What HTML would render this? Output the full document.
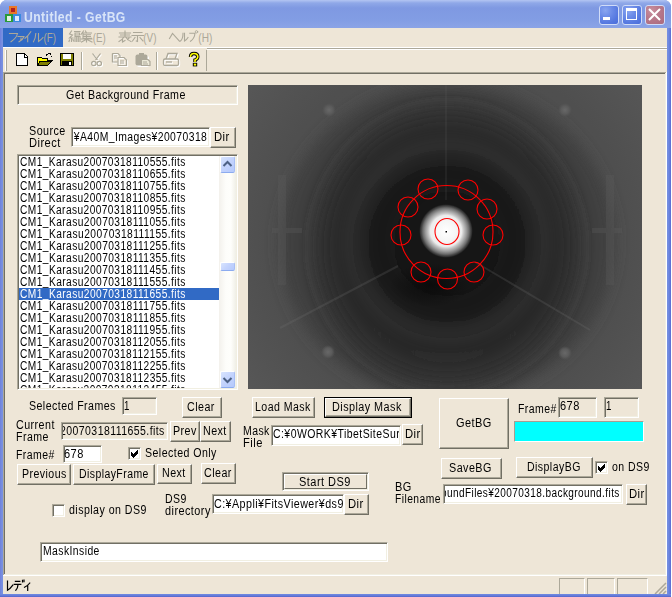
<!DOCTYPE html><html><head><meta charset="utf-8"><style>html,body{margin:0;padding:0;}
body{width:672px;height:597px;position:relative;overflow:hidden;background:#fff;font-family:"Liberation Sans",sans-serif;}
.t{position:absolute;white-space:pre;transform-origin:0 0;letter-spacing:0.5px;}
</style></head><body>
<div style="position:absolute;left:670px;top:0;width:2px;height:597px;background:#fff"></div>
<div style="position:absolute;left:0px;top:0px;width:671px;height:597px;background:linear-gradient(90deg,#6f80dc 0,#7890e0 2px,#7890e0 667px,#6a86e0 669px,#5a6ad0 671px);border-radius:7px 7px 0 0;"></div>
<div style="position:absolute;left:0px;top:594px;width:671px;height:3px;background:linear-gradient(180deg,#7088e0 0,#6a84de 1px,#5565cc 3px);"></div>
<div style="position:absolute;left:0px;top:0px;width:671px;height:28px;background:linear-gradient(180deg,#b3c5f2 0px,#8fa8e8 3px,#7f99e2 8px,#829de4 20px,#8aa3e6 27px);border-radius:7px 7px 0 0;"></div>
<span id="t0" class="t" style="transform:scaleX(0.8709);left:24.2px;top:9.65px;font-size:14px;line-height:14px;color:#d8e4f8;font-weight:bold;">Untitled - GetBG</span>
<svg style="position:absolute;left:4px;top:5px" width="18" height="18">
<rect x="5" y="1" width="8" height="8" fill="#e8782a"/><rect x="7" y="3" width="4" height="4" fill="#b02020"/>
<rect x="1" y="9" width="8" height="8" fill="#2a9a3a"/><rect x="3" y="11" width="4" height="5" fill="#e0f0e0"/>
<rect x="9" y="9" width="8" height="8" fill="#3a8ae0"/><rect x="11" y="11" width="4" height="5" fill="#dde8ff"/>
</svg>
<div style="position:absolute;left:599px;top:5px;width:20px;height:20px;background:radial-gradient(circle at 30% 25%,#8aa6f0 0,#6c8ce8 35%,#5578e0 70%,#4a6ddb 100%);border:1px solid #d0dcf8;border-radius:3px;box-sizing:border-box;"></div>
<div style="position:absolute;left:622px;top:5px;width:20px;height:20px;background:radial-gradient(circle at 30% 25%,#8aa6f0 0,#6c8ce8 35%,#5578e0 70%,#4a6ddb 100%);border:1px solid #d0dcf8;border-radius:3px;box-sizing:border-box;"></div>
<div style="position:absolute;left:645px;top:5px;width:20px;height:20px;background:radial-gradient(circle at 30% 25%,#c9909e 0,#b97a8c 40%,#aa6a7e 100%);border:1px solid #d0dcf8;border-radius:3px;box-sizing:border-box;"></div>
<div style="position:absolute;left:603px;top:17px;width:7px;height:3px;background:#fff;"></div>
<div style="position:absolute;left:626px;top:8px;width:11px;height:12px;box-sizing:border-box;border:1px solid #fff;border-top:3px solid #fff;"></div>
<svg style="position:absolute;left:645px;top:5px" width="20" height="20"><path d="M4 4 L15 15 M15 4 L4 15" stroke="#fff" stroke-width="2"/></svg>
<div style="position:absolute;left:3px;top:28px;width:664px;height:566px;background:#eee6d7;"></div>
<div style="position:absolute;left:3px;top:28px;width:60px;height:19px;background:#316ac5;"></div>
<div style="position:absolute;left:3px;top:47px;width:664px;height:1px;background:#fff;"></div>
<div style="position:absolute;left:207px;top:48px;width:460px;height:1px;background:#aca899;"></div>
<div style="position:absolute;left:207px;top:49px;width:460px;height:1px;background:#fff;"></div>
<svg style="position:absolute;left:0;top:28px" width="230" height="19" viewBox="0 28 230 19"><g fill="none" stroke="#aca899" stroke-width="1.1" stroke-linecap="square"><path d="M9.5 33.5 H17.5 Q16.5 38 11 41.8"/><path d="M18 36.5 H24 Q23 39.5 19 41.8 M21 38 V40.5"/><path d="M30.8 31.8 Q28.5 35.5 25 38.3 M27.7 36 V41.8"/><path d="M35.8 33.5 Q35.5 39 33.5 41.8 M38.5 33.5 V41.5 Q41 40 43 37.5"/><path d="M71.5 31 L69.5 34 L72.5 35 L69.5 38 H73 M71.5 38 V41.5 M69.5 40 L69 41.5 M73 39.5 L73.5 41"/><path d="M74.5 31.5 H80 M75 33 H79.5 V35 H75 V33 M75 33 V41.5 M75 36.5 H80 V41.5 M76.7 36.5 V41.5 M78.3 36.5 V41.5"/><path d="M83.5 31 L81 34.5 M83 33 V38 M83 33 H91.5 M85.5 31 L86.5 33 M83 34.8 H90.5 M83 36.5 H90.5 M83 38.3 H91.5 M81 39 H92 M86.5 35 V42 M86 39.5 L81.5 42 M87 39.5 L92 42"/><path d="M119.5 33 H130.5 M120.5 35 H129.5 M119 37 H131 M125 31 V37 M124 37 Q122 40 119 41.5 M122.5 39 V42 L125 40.5 M126 37.5 Q128 40.5 131 41.5 M129 38 L127.5 39.5"/><path d="M133.5 32.5 H142 M132 35.5 H143.5 M137.5 35.5 V41.5 L136.3 41 M135 37.5 L132.5 41 M140 37.5 L143 41"/><path d="M169.5 38.5 L172.5 33.5 L179.5 41.3"/><path d="M183 33.3 Q183 39 180.5 41 M184.5 33.3 V41 Q186.5 40 188 37.5"/><path d="M189.8 33.3 H195 Q194.5 38.5 190.5 41.3"/><circle cx="196.5" cy="31.8" r="1.2" stroke-width="0.9"/></g><g font-family="Liberation Sans" font-size="12" fill="#aca899"><text x="43.5" y="41.5" textLength="12.5" lengthAdjust="spacingAndGlyphs">(F)</text><text x="92.8" y="41.5" textLength="13" lengthAdjust="spacingAndGlyphs">(E)</text><text x="143.3" y="41.5" textLength="13.2" lengthAdjust="spacingAndGlyphs">(V)</text><text x="198.3" y="41.5" textLength="14" lengthAdjust="spacingAndGlyphs">(H)</text></g></svg>
<svg style="position:absolute;left:0;top:48px" width="210" height="24" viewBox="0 48 210 24" shape-rendering="crispEdges"><path d="M16.5 53.5 H24.5 L27.5 56.5 V65.5 H16.5 Z" fill="#fff" stroke="#000" stroke-width="1"/><path d="M24 54 V57 H27" fill="none" stroke="#000" stroke-width="1"/><path d="M37.5 57.5 H41.5 L42.5 58.5 H47.5 V60.5 H52 L47.5 65.5 H37.5 Z" fill="#ffff00" stroke="#000" stroke-width="1"/><path d="M40 61 H52 L47.5 65.5 H38 Z" fill="#808000" stroke="#000" stroke-width="1"/><path d="M46 55.5 Q48 53 50.5 54 L51.5 55.5" fill="none" stroke="#000" stroke-width="1"/><path d="M50 55.5 H53 L51.5 57.5 Z" fill="#000"/><rect x="60.5" y="53.5" width="13" height="12" fill="#808000" stroke="#000" stroke-width="1"/><rect x="63" y="54" width="8" height="5" fill="#fff"/><rect x="62" y="61" width="10" height="4" fill="#000"/><rect x="69" y="62" width="2" height="3" fill="#fff"/></svg><svg style="position:absolute;left:0;top:48px" width="210" height="24" viewBox="0 48 210 24"><g fill="none" stroke="#fff" stroke-width="1.2" transform="translate(1,1)"><path d="M92.5 53.5 L97.5 60 M100.5 53.5 L95.5 60"/><circle cx="93.8" cy="63.5" r="2.2"/><circle cx="99.3" cy="63.5" r="2.2"/></g><g fill="none" stroke="#aca899" stroke-width="1.2"><path d="M92.5 53.5 L97.5 60 M100.5 53.5 L95.5 60"/><circle cx="93.8" cy="63.5" r="2.2"/><circle cx="99.3" cy="63.5" r="2.2"/></g><g transform="translate(1,1)" fill="none" stroke="#fff" stroke-width="1.2"><path d="M112.5 53.5 H118 L120 55.5 V57 M112.5 53.5 V62 H117.5"/><path d="M112.5 53.5 V62" /><path d="M118 57.5 H124 L126.5 60 V65.5 H118 Z"/><path d="M114 56 H117 M114 58 H117 M120 61 H124 M120 63 H124"/></g><g transform="translate(0,0)" fill="none" stroke="#aca899" stroke-width="1.2"><path d="M112.5 53.5 H118 L120 55.5 V57 M112.5 53.5 V62 H117.5"/><path d="M112.5 53.5 V62" /><path d="M118 57.5 H124 L126.5 60 V65.5 H118 Z"/><path d="M114 56 H117 M114 58 H117 M120 61 H124 M120 63 H124"/></g><rect x="136" y="55" width="12" height="11" rx="2" fill="#fff" transform="translate(1,1)"/><rect x="135.5" y="54.5" width="12" height="11" rx="2" fill="#aca899"/><rect x="139" y="53" width="5" height="2" fill="#aca899"/><path d="M141.5 59.5 H148 L150 61.5 V65.5 H141.5 Z" fill="#ece9d8" stroke="#aca899" stroke-width="1.2"/><path d="M143 62 H147 M143 64 H148" stroke="#aca899" stroke-width="1"/><g transform="translate(1,1)" fill="none" stroke="#fff" stroke-width="1.3"><path d="M166 59 L168 53.5 H177 L175 59"/><rect x="163.5" y="59" width="15" height="6.5" rx="1.5"/><path d="M166 62 H172"/></g><g transform="translate(0,0)" fill="none" stroke="#aca899" stroke-width="1.3"><path d="M166 59 L168 53.5 H177 L175 59"/><rect x="163.5" y="59" width="15" height="6.5" rx="1.5"/><path d="M166 62 H172"/></g></svg><svg style="position:absolute;left:0;top:48px" width="210" height="24" viewBox="0 48 210 24"><path d="M190.5 57 Q190.5 53.5 194 53.5 Q197.8 53.5 197.8 56.8 Q197.8 59 195 60 V62" fill="none" stroke="#000" stroke-width="3.4"/><path d="M190.5 57 Q190.5 53.5 194 53.5 Q197.8 53.5 197.8 56.8 Q197.8 59 195 60 V62" fill="none" stroke="#ffff00" stroke-width="1.6"/><rect x="192.8" y="62.8" width="4.4" height="3.6" fill="#000"/><rect x="193.8" y="63.6" width="2.4" height="2" fill="#ffff00"/></svg>
<div style="position:absolute;left:5px;top:50px;width:1px;height:21px;background:#fff;"></div>
<div style="position:absolute;left:6px;top:50px;width:1px;height:21px;background:#aca899;"></div>
<div style="position:absolute;left:81px;top:52px;width:1px;height:18px;background:#aca899;"></div>
<div style="position:absolute;left:82px;top:52px;width:1px;height:18px;background:#fff;"></div>
<div style="position:absolute;left:156px;top:52px;width:1px;height:18px;background:#aca899;"></div>
<div style="position:absolute;left:157px;top:52px;width:1px;height:18px;background:#fff;"></div>
<div style="position:absolute;left:206px;top:50px;width:1px;height:21px;background:#aca899;"></div>
<div style="position:absolute;left:3px;top:72px;width:664px;height:1px;background:#aca899;"></div>
<div style="position:absolute;left:4px;top:73px;width:662px;height:1px;background:#716f64;"></div>
<div style="position:absolute;left:3px;top:72px;width:1px;height:504px;background:#aca899;"></div>
<div style="position:absolute;left:4px;top:73px;width:1px;height:502px;background:#716f64;"></div>
<div style="position:absolute;left:4px;top:574px;width:662px;height:1px;background:#f1efe2;"></div>
<div style="position:absolute;left:3px;top:575px;width:664px;height:1px;background:#fff;"></div>
<div style="position:absolute;left:665px;top:73px;width:1px;height:502px;background:#f1efe2;"></div>
<div style="position:absolute;left:666px;top:72px;width:1px;height:504px;background:#fff;"></div>
<svg style="position:absolute;left:0;top:576px" width="40" height="18" viewBox="0 576 40 18"><g fill="none" stroke="#000" stroke-width="1.2" stroke-linecap="square"><path d="M7.5 581 V590.3 Q10.5 588.5 12.8 585.2"/><path d="M15.4 581.4 H19.8 M14.2 584.3 H20.8 M18 584.6 Q17.8 588.5 15.8 590.2 M22.5 580.3 V582 M24 580 V581.7"/><path d="M29.8 583 Q27.5 586 24.5 587.3 M27.7 585.4 V590.5"/></g></svg>
<div style="position:absolute;left:559px;top:578px;width:26px;height:16px;box-sizing:border-box;border-top:1px solid #aca899;border-left:1px solid #aca899;border-right:1px solid #fff;"></div>
<div style="position:absolute;left:587px;top:578px;width:28px;height:16px;box-sizing:border-box;border-top:1px solid #aca899;border-left:1px solid #aca899;border-right:1px solid #fff;"></div>
<div style="position:absolute;left:617px;top:578px;width:31px;height:16px;box-sizing:border-box;border-top:1px solid #aca899;border-left:1px solid #aca899;border-right:1px solid #fff;"></div>
<svg style="position:absolute;left:652px;top:580px" width="15" height="14"><path d="M3 14 L14 3 M7 14 L14 7 M11 14 L14 11" stroke="#aca899" stroke-width="1.5"/></svg>
<div style="position:absolute;left:17px;top:85px;width:221px;height:20px;background:#eee6d7;box-sizing:border-box;border-top:1px solid #aca899;border-left:1px solid #aca899;border-right:1px solid #ffffff;border-bottom:1px solid #ffffff;box-shadow:inset 1px 1px 0 #716f64, inset -1px -1px 0 #f1efe2;"></div>
<span id="t1" class="t" style="transform:scaleX(0.8892);left:66.2px;top:89.34px;font-size:12px;line-height:12px;color:#000;">Get Background Frame</span>
<span id="t2" class="t" style="transform:scaleX(0.8969);left:29.2px;top:125.34px;font-size:12px;line-height:12px;color:#000;">Source</span>
<span id="t3" class="t" style="transform:scaleX(0.9259);left:29.2px;top:137.34px;font-size:12px;line-height:12px;color:#000;">Direct</span>
<div style="position:absolute;left:71px;top:127px;width:139px;height:20px;background:#fff;box-sizing:border-box;border-top:1px solid #aca899;border-left:1px solid #aca899;border-right:1px solid #ffffff;border-bottom:1px solid #ffffff;box-shadow:inset 1px 1px 0 #716f64, inset -1px -1px 0 #f1efe2;"></div>
<div style="position:absolute;left:73px;top:129px;width:135px;height:16px;overflow:hidden;"><div style="position:absolute;left:-73px;top:-129px;width:672px;height:597px;">
<span id="t4" class="t" style="transform:scaleX(0.8638);left:70.7px;top:131.34px;font-size:12px;line-height:12px;color:#000;">i¥A40M<span style="position:relative;top:-1px">_</span>Images¥20070318</span>
</div></div>
<div style="position:absolute;left:210px;top:127px;width:26px;height:21px;background:#eee6d7;box-sizing:border-box;border-top:1px solid #ffffff;border-left:1px solid #ffffff;border-right:1px solid #716f64;border-bottom:1px solid #716f64;box-shadow:inset -1px -1px 0 #aca899;"></div>
<span id="t5" class="t" style="transform:scaleX(0.9389);left:214.2px;top:131.34px;font-size:12px;line-height:12px;color:#000;">Dir</span>
<div style="position:absolute;left:17px;top:154px;width:221px;height:236px;background:#fff;box-sizing:border-box;border-top:1px solid #aca899;border-left:1px solid #aca899;border-right:1px solid #ffffff;border-bottom:1px solid #ffffff;box-shadow:inset 1px 1px 0 #716f64, inset -1px -1px 0 #f1efe2;"></div>
<div style="position:absolute;left:19px;top:156px;width:200px;height:232px;overflow:hidden;">
<div style="position:absolute;left:-19px;top:-156px;width:672px;height:597px;">
<span id="t6" class="t" style="transform:scaleX(0.8469);left:20.2px;top:156.34px;font-size:12px;line-height:12px;color:#000;">CM1<span style="position:relative;top:-1px">_</span>Karasu20070318110555.fits</span>
<span id="t7" class="t" style="transform:scaleX(0.8469);left:20.2px;top:168.34px;font-size:12px;line-height:12px;color:#000;">CM1<span style="position:relative;top:-1px">_</span>Karasu20070318110655.fits</span>
<span id="t8" class="t" style="transform:scaleX(0.8469);left:20.2px;top:180.34px;font-size:12px;line-height:12px;color:#000;">CM1<span style="position:relative;top:-1px">_</span>Karasu20070318110755.fits</span>
<span id="t9" class="t" style="transform:scaleX(0.8469);left:20.2px;top:192.34px;font-size:12px;line-height:12px;color:#000;">CM1<span style="position:relative;top:-1px">_</span>Karasu20070318110855.fits</span>
<span id="t10" class="t" style="transform:scaleX(0.8469);left:20.2px;top:204.34px;font-size:12px;line-height:12px;color:#000;">CM1<span style="position:relative;top:-1px">_</span>Karasu20070318110955.fits</span>
<span id="t11" class="t" style="transform:scaleX(0.8508);left:20.2px;top:216.34px;font-size:12px;line-height:12px;color:#000;">CM1<span style="position:relative;top:-1px">_</span>Karasu20070318111055.fits</span>
<span id="t12" class="t" style="transform:scaleX(0.8547);left:20.2px;top:228.34px;font-size:12px;line-height:12px;color:#000;">CM1<span style="position:relative;top:-1px">_</span>Karasu20070318111155.fits</span>
<span id="t13" class="t" style="transform:scaleX(0.8508);left:20.2px;top:240.34px;font-size:12px;line-height:12px;color:#000;">CM1<span style="position:relative;top:-1px">_</span>Karasu20070318111255.fits</span>
<span id="t14" class="t" style="transform:scaleX(0.8508);left:20.2px;top:252.34px;font-size:12px;line-height:12px;color:#000;">CM1<span style="position:relative;top:-1px">_</span>Karasu20070318111355.fits</span>
<span id="t15" class="t" style="transform:scaleX(0.8508);left:20.2px;top:264.34px;font-size:12px;line-height:12px;color:#000;">CM1<span style="position:relative;top:-1px">_</span>Karasu20070318111455.fits</span>
<span id="t16" class="t" style="transform:scaleX(0.8508);left:20.2px;top:276.34px;font-size:12px;line-height:12px;color:#000;">CM1<span style="position:relative;top:-1px">_</span>Karasu20070318111555.fits</span>
<div style="position:absolute;left:19px;top:288px;width:200px;height:12px;background:#316ac5;"></div>
<span id="t17" class="t" style="transform:scaleX(0.8508);left:20.2px;top:288.34px;font-size:12px;line-height:12px;color:#fff;">CM1<span style="position:relative;top:-1px">_</span>Karasu20070318111655.fits</span>
<span id="t18" class="t" style="transform:scaleX(0.8508);left:20.2px;top:300.34px;font-size:12px;line-height:12px;color:#000;">CM1<span style="position:relative;top:-1px">_</span>Karasu20070318111755.fits</span>
<span id="t19" class="t" style="transform:scaleX(0.8508);left:20.2px;top:312.34px;font-size:12px;line-height:12px;color:#000;">CM1<span style="position:relative;top:-1px">_</span>Karasu20070318111855.fits</span>
<span id="t20" class="t" style="transform:scaleX(0.8508);left:20.2px;top:324.34px;font-size:12px;line-height:12px;color:#000;">CM1<span style="position:relative;top:-1px">_</span>Karasu20070318111955.fits</span>
<span id="t21" class="t" style="transform:scaleX(0.8469);left:20.2px;top:336.34px;font-size:12px;line-height:12px;color:#000;">CM1<span style="position:relative;top:-1px">_</span>Karasu20070318112055.fits</span>
<span id="t22" class="t" style="transform:scaleX(0.8469);left:20.2px;top:348.34px;font-size:12px;line-height:12px;color:#000;">CM1<span style="position:relative;top:-1px">_</span>Karasu20070318112155.fits</span>
<span id="t23" class="t" style="transform:scaleX(0.8469);left:20.2px;top:360.34px;font-size:12px;line-height:12px;color:#000;">CM1<span style="position:relative;top:-1px">_</span>Karasu20070318112255.fits</span>
<span id="t24" class="t" style="transform:scaleX(0.8469);left:20.2px;top:372.34px;font-size:12px;line-height:12px;color:#000;">CM1<span style="position:relative;top:-1px">_</span>Karasu20070318112355.fits</span>
<span id="t25" class="t" style="transform:scaleX(0.8469);left:20.2px;top:384.34px;font-size:12px;line-height:12px;color:#000;">CM1<span style="position:relative;top:-1px">_</span>Karasu20070318112455.fits</span>
</div></div>
<div style="position:absolute;left:219px;top:156px;width:17px;height:232px;background:linear-gradient(90deg,#f3f1ec 0,#fdfdfa 40%,#fefefb 70%,#f0efe6 100%);"></div>
<div style="position:absolute;left:220px;top:156px;width:15px;height:17px;box-sizing:border-box;border-radius:2px;background:linear-gradient(135deg,#d8e4fe 0,#c3d3fd 50%,#b5c9fc 100%);border:1px solid #fff;border-bottom:1px solid #8cabef;border-right:1px solid #a7bef5;"></div>
<div style="position:absolute;left:220px;top:371px;width:15px;height:17px;box-sizing:border-box;border-radius:2px;background:linear-gradient(135deg,#d8e4fe 0,#c3d3fd 50%,#b5c9fc 100%);border:1px solid #fff;border-bottom:1px solid #8cabef;border-right:1px solid #a7bef5;"></div>
<div style="position:absolute;left:220px;top:262px;width:15px;height:9px;box-sizing:border-box;border-radius:2px;background:linear-gradient(135deg,#d8e4fe 0,#c3d3fd 50%,#b5c9fc 100%);border:1px solid #fff;border-bottom:1px solid #8cabef;border-right:1px solid #a7bef5;"></div>
<svg style="position:absolute;left:220px;top:156px" width="15" height="17"><path d="M3.5 10 L7.5 6 L11.5 10" fill="none" stroke="#4d6185" stroke-width="2"/></svg>
<svg style="position:absolute;left:220px;top:371px" width="15" height="17"><path d="M3.5 7 L7.5 11 L11.5 7" fill="none" stroke="#4d6185" stroke-width="2"/></svg>
<span id="t26" class="t" style="transform:scaleX(0.8839);left:29.2px;top:400.34px;font-size:12px;line-height:12px;color:#000;">Selected Frames</span>
<div style="position:absolute;left:122px;top:397px;width:35px;height:18px;background:#eee6d7;box-sizing:border-box;border-top:1px solid #aca899;border-left:1px solid #aca899;border-right:1px solid #ffffff;border-bottom:1px solid #ffffff;box-shadow:inset 1px 1px 0 #716f64, inset -1px -1px 0 #f1efe2;"></div>
<span id="t27" class="t" style="transform:scaleX(0.8070);left:124.2px;top:400.34px;font-size:12px;line-height:12px;color:#000;">1</span>
<div style="position:absolute;left:182px;top:397px;width:40px;height:21px;background:#eee6d7;box-sizing:border-box;border-top:1px solid #ffffff;border-left:1px solid #ffffff;border-right:1px solid #716f64;border-bottom:1px solid #716f64;box-shadow:inset -1px -1px 0 #aca899;"></div>
<span id="t28" class="t" style="transform:scaleX(0.8914);left:187.2px;top:401.34px;font-size:12px;line-height:12px;color:#000;">Clear</span>
<span id="t29" class="t" style="transform:scaleX(0.8916);left:16.2px;top:419.34px;font-size:12px;line-height:12px;color:#000;">Current</span>
<span id="t30" class="t" style="transform:scaleX(0.8824);left:16.2px;top:431.34px;font-size:12px;line-height:12px;color:#000;">Frame</span>
<div style="position:absolute;left:61px;top:422px;width:107px;height:18px;background:#eee6d7;box-sizing:border-box;border-top:1px solid #aca899;border-left:1px solid #aca899;border-right:1px solid #ffffff;border-bottom:1px solid #ffffff;box-shadow:inset 1px 1px 0 #716f64, inset -1px -1px 0 #f1efe2;"></div>
<div style="position:absolute;left:63px;top:424px;width:103px;height:14px;overflow:hidden;"><div style="position:absolute;left:-63px;top:-424px;width:672px;height:597px;">
<span id="t31" class="t" style="transform:scaleX(0.8746);left:59.7px;top:425.34px;font-size:12px;line-height:12px;color:#000;">20070318111655.fits</span>
</div></div>
<div style="position:absolute;left:170px;top:421px;width:30px;height:21px;background:#eee6d7;box-sizing:border-box;border-top:1px solid #ffffff;border-left:1px solid #ffffff;border-right:1px solid #716f64;border-bottom:1px solid #716f64;box-shadow:inset -1px -1px 0 #aca899;"></div>
<span id="t32" class="t" style="transform:scaleX(0.8918);left:173.2px;top:425.34px;font-size:12px;line-height:12px;color:#000;">Prev</span>
<div style="position:absolute;left:200px;top:421px;width:31px;height:21px;background:#eee6d7;box-sizing:border-box;border-top:1px solid #ffffff;border-left:1px solid #ffffff;border-right:1px solid #716f64;border-bottom:1px solid #716f64;box-shadow:inset -1px -1px 0 #aca899;"></div>
<span id="t33" class="t" style="transform:scaleX(0.8918);left:203.2px;top:425.34px;font-size:12px;line-height:12px;color:#000;">Next</span>
<span id="t34" class="t" style="transform:scaleX(0.8750);left:16.2px;top:449.34px;font-size:12px;line-height:12px;color:#000;">Frame#</span>
<div style="position:absolute;left:63px;top:445px;width:39px;height:18px;background:#fff;box-sizing:border-box;border-top:1px solid #aca899;border-left:1px solid #aca899;border-right:1px solid #ffffff;border-bottom:1px solid #ffffff;box-shadow:inset 1px 1px 0 #716f64, inset -1px -1px 0 #f1efe2;"></div>
<span id="t35" class="t" style="transform:scaleX(0.9196);left:64.2px;top:448.34px;font-size:12px;line-height:12px;color:#000;">678</span>
<div style="position:absolute;left:128px;top:447px;width:13px;height:13px;background:#fff;box-sizing:border-box;border-top:1px solid #aca899;border-left:1px solid #aca899;border-right:1px solid #ffffff;border-bottom:1px solid #ffffff;box-shadow:inset 1px 1px 0 #716f64, inset -1px -1px 0 #f1efe2;"></div>
<svg style="position:absolute;left:128px;top:447px" width="13" height="13"><path d="M3 5.5 L5.5 8 L10 3.5 M3 6.5 L5.5 9 L10 4.5 M3 7.5 L5.5 10 L10 5.5" stroke="#000" stroke-width="1" fill="none" shape-rendering="crispEdges"/></svg>
<span id="t36" class="t" style="transform:scaleX(0.8840);left:145.2px;top:447.34px;font-size:12px;line-height:12px;color:#000;">Selected Only</span>
<div style="position:absolute;left:17px;top:464px;width:54px;height:21px;background:#eee6d7;box-sizing:border-box;border-top:1px solid #ffffff;border-left:1px solid #ffffff;border-right:1px solid #716f64;border-bottom:1px solid #716f64;box-shadow:inset -1px -1px 0 #aca899;"></div>
<span id="t37" class="t" style="transform:scaleX(0.8838);left:22.2px;top:468.34px;font-size:12px;line-height:12px;color:#000;">Previous</span>
<div style="position:absolute;left:73px;top:464px;width:82px;height:21px;background:#eee6d7;box-sizing:border-box;border-top:1px solid #ffffff;border-left:1px solid #ffffff;border-right:1px solid #716f64;border-bottom:1px solid #716f64;box-shadow:inset -1px -1px 0 #aca899;"></div>
<span id="t38" class="t" style="transform:scaleX(0.8723);left:79.2px;top:468.34px;font-size:12px;line-height:12px;color:#000;">DisplayFrame</span>
<div style="position:absolute;left:157px;top:464px;width:35px;height:20px;background:#eee6d7;box-sizing:border-box;border-top:1px solid #ffffff;border-left:1px solid #ffffff;border-right:1px solid #716f64;border-bottom:1px solid #716f64;box-shadow:inset -1px -1px 0 #aca899;"></div>
<span id="t39" class="t" style="transform:scaleX(0.8918);left:162.2px;top:467.34px;font-size:12px;line-height:12px;color:#000;">Next</span>
<div style="position:absolute;left:201px;top:463px;width:35px;height:21px;background:#eee6d7;box-sizing:border-box;border-top:1px solid #ffffff;border-left:1px solid #ffffff;border-right:1px solid #716f64;border-bottom:1px solid #716f64;box-shadow:inset -1px -1px 0 #aca899;"></div>
<span id="t40" class="t" style="transform:scaleX(0.8914);left:204.2px;top:467.34px;font-size:12px;line-height:12px;color:#000;">Clear</span>
<div style="position:absolute;left:52px;top:504px;width:13px;height:13px;background:#fff;box-sizing:border-box;border-top:1px solid #aca899;border-left:1px solid #aca899;border-right:1px solid #ffffff;border-bottom:1px solid #ffffff;box-shadow:inset 1px 1px 0 #716f64, inset -1px -1px 0 #f1efe2;"></div>
<span id="t41" class="t" style="transform:scaleX(0.8869);left:69.2px;top:504.34px;font-size:12px;line-height:12px;color:#000;">display on DS9</span>
<span id="t42" class="t" style="transform:scaleX(0.8775);left:165.2px;top:493.34px;font-size:12px;line-height:12px;color:#000;">DS9</span>
<span id="t43" class="t" style="transform:scaleX(0.9067);left:165.2px;top:505.34px;font-size:12px;line-height:12px;color:#000;">directory</span>
<div style="position:absolute;left:212px;top:494px;width:132px;height:20px;background:#fff;box-sizing:border-box;border-top:1px solid #aca899;border-left:1px solid #aca899;border-right:1px solid #ffffff;border-bottom:1px solid #ffffff;box-shadow:inset 1px 1px 0 #716f64, inset -1px -1px 0 #f1efe2;"></div>
<span id="t44" class="t" style="transform:scaleX(0.8930);left:214.2px;top:498.34px;font-size:12px;line-height:12px;color:#000;">C:¥Appli¥FitsViewer¥ds9</span>
<div style="position:absolute;left:344px;top:494px;width:25px;height:21px;background:#eee6d7;box-sizing:border-box;border-top:1px solid #ffffff;border-left:1px solid #ffffff;border-right:1px solid #716f64;border-bottom:1px solid #716f64;box-shadow:inset -1px -1px 0 #aca899;"></div>
<span id="t45" class="t" style="transform:scaleX(0.9389);left:348.2px;top:498.34px;font-size:12px;line-height:12px;color:#000;">Dir</span>
<div style="position:absolute;left:282px;top:472px;width:87px;height:19px;background:#eee6d7;box-sizing:border-box;border-top:1px solid #aca899;border-left:1px solid #aca899;border-right:1px solid #ffffff;border-bottom:1px solid #ffffff;box-shadow:inset 1px 1px 0 #716f64, inset -1px -1px 0 #f1efe2;"></div>
<div style="position:absolute;left:284px;top:474px;width:83px;height:15px;box-sizing:border-box;border-top:1px solid #fff;border-left:1px solid #fff;border-right:1px solid #716f64;border-bottom:1px solid #716f64;"></div>
<span id="t46" class="t" style="transform:scaleX(0.9163);left:299.2px;top:476.34px;font-size:12px;line-height:12px;color:#000;">Start DS9</span>
<div style="position:absolute;left:40px;top:542px;width:348px;height:20px;background:#fff;box-sizing:border-box;border-top:1px solid #aca899;border-left:1px solid #aca899;border-right:1px solid #ffffff;border-bottom:1px solid #ffffff;box-shadow:inset 1px 1px 0 #716f64, inset -1px -1px 0 #f1efe2;"></div>
<span id="t47" class="t" style="transform:scaleX(0.8645);left:43.2px;top:545.34px;font-size:12px;line-height:12px;color:#000;">MaskInside</span>
<svg style="position:absolute;left:248px;top:85px" width="394" height="304" viewBox="248 85 394 304">
<defs>
<filter id="bl8" filterUnits="userSpaceOnUse" x="248" y="85" width="394" height="304"><feGaussianBlur stdDeviation="7"/></filter>
<filter id="bl5" filterUnits="userSpaceOnUse" x="248" y="85" width="394" height="304"><feGaussianBlur stdDeviation="5"/></filter>
<filter id="bl12" filterUnits="userSpaceOnUse" x="248" y="85" width="394" height="304"><feGaussianBlur stdDeviation="12"/></filter>
<radialGradient id="outerG" gradientUnits="userSpaceOnUse" cx="447" cy="237" r="260">
<stop offset="0" stop-color="#4c4c4c"/>
<stop offset="0.7" stop-color="#4f4f4f"/>
<stop offset="1" stop-color="#585858"/>
</radialGradient>
<radialGradient id="innerG" gradientUnits="userSpaceOnUse" cx="447" cy="244" r="132">
<stop offset="0" stop-color="#121212"/>
<stop offset="0.35" stop-color="#181818"/>
<stop offset="0.6" stop-color="#1f1f1f"/>
<stop offset="0.8" stop-color="#282828"/>
<stop offset="1" stop-color="#2f2f2f"/>
</radialGradient>
<radialGradient id="spot" gradientUnits="userSpaceOnUse" cx="446" cy="231" r="27">
<stop offset="0" stop-color="#fff" stop-opacity="1"/>
<stop offset="0.35" stop-color="#f6f6f6" stop-opacity="1"/>
<stop offset="0.58" stop-color="#ececec" stop-opacity="1"/>
<stop offset="0.66" stop-color="#c4c4c4" stop-opacity="1"/>
<stop offset="0.76" stop-color="#9a9a9a" stop-opacity="1"/>
<stop offset="0.86" stop-color="#6a6a6a" stop-opacity="1"/>
<stop offset="0.95" stop-color="#3a3a3a" stop-opacity="0.8"/>
<stop offset="1" stop-color="#222" stop-opacity="0"/>
</radialGradient>
<radialGradient id="dot" r="0.5">
<stop offset="0" stop-color="#686868"/>
<stop offset="0.6" stop-color="#5a5a5a"/>
<stop offset="1" stop-color="#555" stop-opacity="0"/>
</radialGradient>
<radialGradient id="shadow" r="0.5">
<stop offset="0" stop-color="#080808" stop-opacity="0.8"/>
<stop offset="1" stop-color="#080808" stop-opacity="0"/>
</radialGradient>
</defs>
<rect x="248" y="85" width="394" height="304" fill="url(#outerG)"/>
<ellipse cx="447" cy="242" rx="168" ry="158" fill="#414141" filter="url(#bl8)"/>
<ellipse cx="447" cy="246" rx="134" ry="140" fill="#353535" filter="url(#bl8)"/>
<ellipse cx="447" cy="246" rx="126" ry="132" fill="url(#innerG)" filter="url(#bl12)"/>
<circle cx="447" cy="240" r="66" fill="none" stroke="#000" stroke-width="18" opacity="0.14" filter="url(#bl8)"/>
<circle cx="447" cy="240" r="95" fill="none" stroke="#fff" stroke-width="16" opacity="0.04" filter="url(#bl8)"/>
<ellipse cx="430" cy="285" rx="40" ry="22" fill="url(#shadow)"/>
<g fill="#5e5e5e" opacity="0.3">
<rect x="278" y="175" width="8" height="110"/>
<rect x="272" y="228" width="30" height="5"/>
<rect x="606" y="175" width="8" height="110"/>
<rect x="592" y="228" width="30" height="5"/>
</g>
<line x1="446" y1="85" x2="446" y2="200" stroke="#666" stroke-opacity="0.2" stroke-width="1.5"/>
<line x1="398" y1="266" x2="280" y2="328" stroke="#777" stroke-opacity="0.22" stroke-width="2"/>
<line x1="475" y1="262" x2="590" y2="330" stroke="#777" stroke-opacity="0.22" stroke-width="2"/>
<ellipse cx="446" cy="231" rx="27" ry="28" fill="url(#spot)"/>
<circle cx="329" cy="110" r="7" fill="url(#dot)"/>
<circle cx="565" cy="110" r="7" fill="url(#dot)"/>
<circle cx="328" cy="352" r="7" fill="url(#dot)"/>
<circle cx="565" cy="353" r="7" fill="url(#dot)"/>
<g fill="none" stroke="#ff0000" stroke-width="1.1">
<circle cx="446.5" cy="232" r="46.5"/>
<ellipse cx="447" cy="231.5" rx="12" ry="13"/>
<circle cx="428" cy="189" r="10"/>
<circle cx="468" cy="190" r="10"/>
<circle cx="408" cy="207" r="10"/>
<circle cx="487" cy="209" r="10"/>
<circle cx="401" cy="235" r="10"/>
<circle cx="493" cy="235" r="10"/>
<circle cx="421" cy="272" r="10"/>
<circle cx="447.5" cy="279" r="10"/>
<circle cx="474" cy="272" r="10"/>
</g>
<rect x="445.5" y="231" width="1.5" height="1.5" fill="#000"/>
</svg>
<div style="position:absolute;left:252px;top:397px;width:63px;height:21px;background:#eee6d7;box-sizing:border-box;border-top:1px solid #ffffff;border-left:1px solid #ffffff;border-right:1px solid #716f64;border-bottom:1px solid #716f64;box-shadow:inset -1px -1px 0 #aca899;"></div>
<span id="t48" class="t" style="transform:scaleX(0.8829);left:255.2px;top:401.34px;font-size:12px;line-height:12px;color:#000;">Load Mask</span>
<div style="position:absolute;left:324px;top:397px;width:88px;height:21px;background:#000;"></div>
<div style="position:absolute;left:325px;top:398px;width:86px;height:19px;background:#eee6d7;box-sizing:border-box;border-top:1px solid #ffffff;border-left:1px solid #ffffff;border-right:1px solid #716f64;border-bottom:1px solid #716f64;box-shadow:inset -1px -1px 0 #aca899;"></div>
<span id="t49" class="t" style="transform:scaleX(0.9023);left:332.2px;top:401.34px;font-size:12px;line-height:12px;color:#000;">Display Mask</span>
<span id="t50" class="t" style="transform:scaleX(0.8738);left:243.2px;top:425.34px;font-size:12px;line-height:12px;color:#000;">Mask</span>
<span id="t51" class="t" style="transform:scaleX(0.9277);left:243.2px;top:437.34px;font-size:12px;line-height:12px;color:#000;">File</span>
<div style="position:absolute;left:271px;top:425px;width:130px;height:21px;background:#fff;box-sizing:border-box;border-top:1px solid #aca899;border-left:1px solid #aca899;border-right:1px solid #ffffff;border-bottom:1px solid #ffffff;box-shadow:inset 1px 1px 0 #716f64, inset -1px -1px 0 #f1efe2;"></div>
<div style="position:absolute;left:273px;top:427px;width:126px;height:17px;overflow:hidden;"><div style="position:absolute;left:-273px;top:-427px;width:672px;height:597px;">
<span id="t52" class="t" style="transform:scaleX(0.8740);left:273.2px;top:428.34px;font-size:12px;line-height:12px;color:#000;">C:¥0WORK¥TibetSiteSurv</span>
</div></div>
<div style="position:absolute;left:402px;top:424px;width:21px;height:21px;background:#eee6d7;box-sizing:border-box;border-top:1px solid #ffffff;border-left:1px solid #ffffff;border-right:1px solid #716f64;border-bottom:1px solid #716f64;box-shadow:inset -1px -1px 0 #aca899;"></div>
<span id="t53" class="t" style="transform:scaleX(0.9389);left:405.2px;top:428.34px;font-size:12px;line-height:12px;color:#000;">Dir</span>
<div style="position:absolute;left:439px;top:398px;width:70px;height:51px;background:#eee6d7;box-sizing:border-box;border-top:1px solid #ffffff;border-left:1px solid #ffffff;border-right:1px solid #716f64;border-bottom:1px solid #716f64;box-shadow:inset -1px -1px 0 #aca899;"></div>
<span id="t54" class="t" style="transform:scaleX(0.9136);left:456.2px;top:417.34px;font-size:12px;line-height:12px;color:#000;">GetBG</span>
<span id="t55" class="t" style="transform:scaleX(0.8750);left:518.2px;top:403.34px;font-size:12px;line-height:12px;color:#000;">Frame#</span>
<div style="position:absolute;left:558px;top:397px;width:39px;height:21px;background:#eee6d7;box-sizing:border-box;border-top:1px solid #aca899;border-left:1px solid #aca899;border-right:1px solid #ffffff;border-bottom:1px solid #ffffff;box-shadow:inset 1px 1px 0 #716f64, inset -1px -1px 0 #f1efe2;"></div>
<span id="t56" class="t" style="transform:scaleX(0.9196);left:560.2px;top:400.34px;font-size:12px;line-height:12px;color:#000;">678</span>
<div style="position:absolute;left:604px;top:397px;width:35px;height:21px;background:#eee6d7;box-sizing:border-box;border-top:1px solid #aca899;border-left:1px solid #aca899;border-right:1px solid #ffffff;border-bottom:1px solid #ffffff;box-shadow:inset 1px 1px 0 #716f64, inset -1px -1px 0 #f1efe2;"></div>
<span id="t57" class="t" style="transform:scaleX(0.8070);left:606.2px;top:400.34px;font-size:12px;line-height:12px;color:#000;">1</span>
<div style="position:absolute;left:514px;top:421px;width:130px;height:21px;background:#00ffff;box-sizing:border-box;border-top:1px solid #a89c90;border-left:1px solid #a89c90;border-right:1px solid #fff;border-bottom:1px solid #fff;"></div>
<div style="position:absolute;left:441px;top:458px;width:61px;height:21px;background:#eee6d7;box-sizing:border-box;border-top:1px solid #ffffff;border-left:1px solid #ffffff;border-right:1px solid #716f64;border-bottom:1px solid #716f64;box-shadow:inset -1px -1px 0 #aca899;"></div>
<span id="t58" class="t" style="transform:scaleX(0.8972);left:449.2px;top:462.34px;font-size:12px;line-height:12px;color:#000;">SaveBG</span>
<div style="position:absolute;left:516px;top:457px;width:77px;height:21px;background:#eee6d7;box-sizing:border-box;border-top:1px solid #ffffff;border-left:1px solid #ffffff;border-right:1px solid #716f64;border-bottom:1px solid #716f64;box-shadow:inset -1px -1px 0 #aca899;"></div>
<span id="t59" class="t" style="transform:scaleX(0.8793);left:527.2px;top:461.34px;font-size:12px;line-height:12px;color:#000;">DisplayBG</span>
<div style="position:absolute;left:595px;top:461px;width:13px;height:13px;background:#fff;box-sizing:border-box;border-top:1px solid #aca899;border-left:1px solid #aca899;border-right:1px solid #ffffff;border-bottom:1px solid #ffffff;box-shadow:inset 1px 1px 0 #716f64, inset -1px -1px 0 #f1efe2;"></div>
<svg style="position:absolute;left:595px;top:461px" width="13" height="13"><path d="M3 5.5 L5.5 8 L10 3.5 M3 6.5 L5.5 9 L10 4.5 M3 7.5 L5.5 10 L10 5.5" stroke="#000" stroke-width="1" fill="none" shape-rendering="crispEdges"/></svg>
<span id="t60" class="t" style="transform:scaleX(0.8784);left:612.2px;top:461.34px;font-size:12px;line-height:12px;color:#000;">on DS9</span>
<span id="t61" class="t" style="transform:scaleX(0.9158);left:395.2px;top:481.34px;font-size:12px;line-height:12px;color:#000;">BG</span>
<span id="t62" class="t" style="transform:scaleX(0.8583);left:395.2px;top:493.34px;font-size:12px;line-height:12px;color:#000;">Filename</span>
<div style="position:absolute;left:443px;top:484px;width:180px;height:20px;background:#fff;box-sizing:border-box;border-top:1px solid #aca899;border-left:1px solid #aca899;border-right:1px solid #ffffff;border-bottom:1px solid #ffffff;box-shadow:inset 1px 1px 0 #716f64, inset -1px -1px 0 #f1efe2;"></div>
<div style="position:absolute;left:445px;top:486px;width:176px;height:16px;overflow:hidden;"><div style="position:absolute;left:-445px;top:-486px;width:672px;height:597px;">
<span id="t63" class="t" style="transform:scaleX(0.8362);left:440.7px;top:487.34px;font-size:12px;line-height:12px;color:#000;">oundFiles¥20070318.background.fits</span>
</div></div>
<div style="position:absolute;left:626px;top:484px;width:21px;height:21px;background:#eee6d7;box-sizing:border-box;border-top:1px solid #ffffff;border-left:1px solid #ffffff;border-right:1px solid #716f64;border-bottom:1px solid #716f64;box-shadow:inset -1px -1px 0 #aca899;"></div>
<span id="t64" class="t" style="transform:scaleX(0.9389);left:629.2px;top:488.34px;font-size:12px;line-height:12px;color:#000;">Dir</span>
</body></html>
